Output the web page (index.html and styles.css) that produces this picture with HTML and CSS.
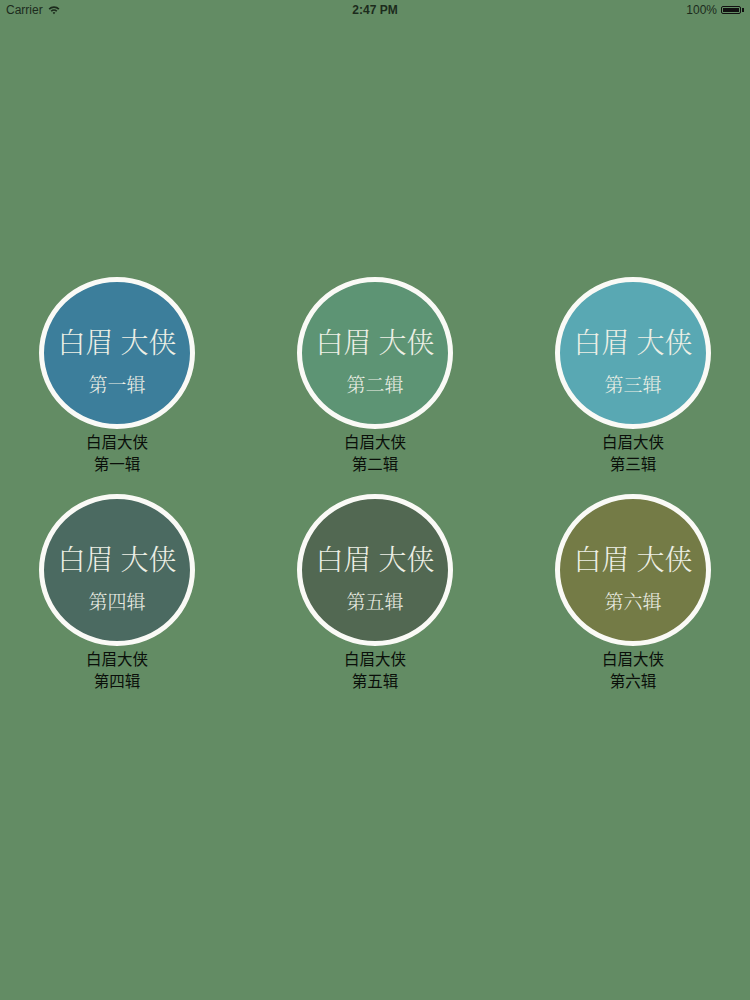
FILE: index.html
```html
<!DOCTYPE html>
<html lang="zh">
<head>
<meta charset="utf-8">
<link rel="stylesheet" href="styles.css">
</head>
<body>
<div class="status">
  <div class="st-left"><span>Carrier</span>
    <svg class="wifi" width="12" height="10" viewBox="0 0 11 9"><path d="M0.5 3.2 A7 7 0 0 1 10.5 3.2 L9.4 4.3 A5.5 5.5 0 0 0 1.6 4.3 Z" fill="#1c2b1c"/><path d="M2.4 5.1 A4.3 4.3 0 0 1 8.6 5.1 L7.5 6.2 A2.8 2.8 0 0 0 3.5 6.2 Z" fill="#1c2b1c"/><path d="M4.3 7 A1.7 1.7 0 0 1 6.7 7 L5.5 8.3 Z" fill="#1c2b1c"/></svg>
  </div>
  <div class="st-mid">2:47 PM</div>
  <div class="st-right"><span>100%</span><span class="batt"><span class="batt-fill"></span></span><span class="batt-tip"></span></div>
</div>
<main class="grid">
  <div class="item"><div class="disc c1"><div class="t1">白眉 大侠</div><div class="t2">第一辑</div></div><div class="label"><div>白眉大侠</div><div>第一辑</div></div></div>
  <div class="item"><div class="disc c2"><div class="t1">白眉 大侠</div><div class="t2">第二辑</div></div><div class="label"><div>白眉大侠</div><div>第二辑</div></div></div>
  <div class="item"><div class="disc c3"><div class="t1">白眉 大侠</div><div class="t2">第三辑</div></div><div class="label"><div>白眉大侠</div><div>第三辑</div></div></div>
  <div class="item"><div class="disc c4"><div class="t1">白眉 大侠</div><div class="t2">第四辑</div></div><div class="label"><div>白眉大侠</div><div>第四辑</div></div></div>
  <div class="item"><div class="disc c5"><div class="t1">白眉 大侠</div><div class="t2">第五辑</div></div><div class="label"><div>白眉大侠</div><div>第五辑</div></div></div>
  <div class="item"><div class="disc c6"><div class="t1">白眉 大侠</div><div class="t2">第六辑</div></div><div class="label"><div>白眉大侠</div><div>第六辑</div></div></div>
</main>
</body>
</html>
```
FILE: styles.css
```css
html, body {
  margin: 0;
  padding: 0;
  background: #638c64;
  height: 1000px;
  overflow: hidden;
}
body {
  font-family: "Noto Sans CJK SC", "Noto Sans", sans-serif;
}
.status {
  height: 20px;
  display: flex;
  align-items: center;
  justify-content: space-between;
  padding: 0 6px 0 6px;
  font-family: "Liberation Sans", "Noto Sans", sans-serif;
  font-size: 12px;
  color: #1c2b1c;
}
.st-left, .st-right {
  width: 120px;
  display: flex;
  align-items: center;
}
.st-left { gap: 5px; }
.st-mid { font-weight: bold; }
.st-right { justify-content: flex-end; }
.batt {
  margin-left: 4px;
  width: 20px;
  height: 8px;
  box-sizing: border-box;
  border: 1px solid #111;
  border-radius: 2px;
  padding: 1px;
  display: flex;
}
.batt-fill { flex: 1; background: #111; }
.batt-tip {
  width: 2px;
  height: 4px;
  background: #111;
  margin-left: 1px;
}
.grid {
  display: grid;
  grid-template-columns: repeat(3, 156px);
  column-gap: 102px;
  row-gap: 20px;
  padding: 257px 0 0 39px;
}
.item {
  display: flex;
  flex-direction: column;
  align-items: center;
}
.disc {
  width: 156px;
  height: 152px;
  box-sizing: border-box;
  border: 5px solid #fafaf6;
  border-radius: 50%;
  display: flex;
  flex-direction: column;
  align-items: center;
  color: #eef0e6;
  font-family: "Noto Serif CJK SC", "Noto Sans CJK SC", serif;
  font-weight: 300;
}
.t1 {
  margin-top: 42px;
  font-size: 28px;
  line-height: 34px;
}
.t2 {
  margin-top: 14px;
  font-size: 19px;
  line-height: 24px;
}
.c1 { background: #3c7e9b; }
.c2 { background: #5d9474; }
.c3 { background: #59a8b3; }
.c4 { background: #4b6a61; }
.c5 { background: #526852; }
.c6 { background: #747b46; }
.label {
  margin-top: 1px;
  font-size: 15.5px;
  line-height: 22px;
  color: #0a0f0a;
  text-align: center;
}
```
